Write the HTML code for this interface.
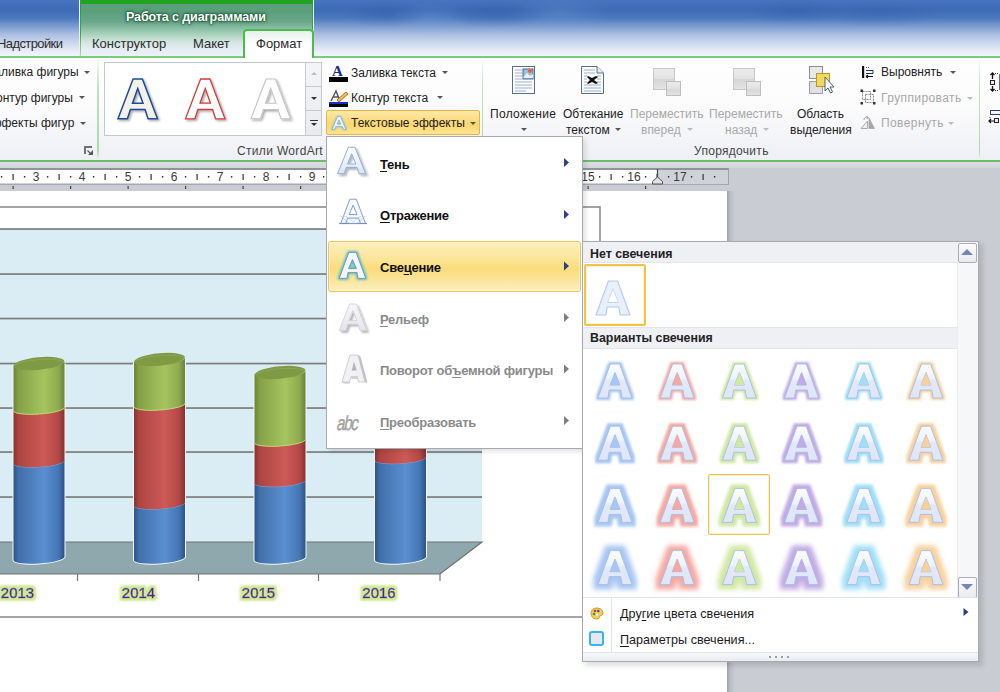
<!DOCTYPE html>
<html><head><meta charset="utf-8">
<style>
*{margin:0;padding:0;box-sizing:border-box}
html,body{width:1000px;height:692px;overflow:hidden}
body{position:relative;background:#c9ccd2;font-family:"Liberation Sans",sans-serif;font-size:12px;color:#1e1e1e}
.a{position:absolute;white-space:nowrap}
#title{left:0;top:0;width:1000px;height:57px;background:linear-gradient(#4774bd 0,#3d6bb6 10px,#4c78bd 18px,#7f9fd2 27px,#a9bde0 34px,#d3ddef 45px,#eaeff8 52px,#f2f4f9 56px)}
#ctx{left:79px;top:0;width:235px;height:57px;background:linear-gradient(#5a9e7c 0,#5b9f7d 12px,#6aa88a 22px,#9ccbb2 32px,#d4e6e0 42px,#e6edf4 50px,#eef2f8 57px);border-left:1px solid #e8f0ea;border-right:1px solid #e8f0ea}
#ctxbar{left:80px;top:0;width:233px;height:4px;background:#21a421}
#ribbon{left:0;top:56px;width:1000px;height:106px;background:linear-gradient(#ffffff 0,#fbfbfc 50px,#eeeff5 104px);border-top:2px solid #78cd78;border-bottom:2px solid #6cbb6c}
.tab{top:36px;font-size:13px;color:#2b2b2b}
#fmt{left:243px;top:29px;width:71px;height:29px;background:linear-gradient(#e6f1ea,#ffffff 14px);border:2px solid #4cbb4c;border-bottom:none;border-radius:4px 4px 0 0}
.sep{width:1px;background:linear-gradient(#f3faf3,#b8e4b8 30%,#a8dca8 90%,#eef5ee)}
.lbl{font-size:12px;color:#222}
.dd{display:inline-block;width:0;height:0;border-left:3px solid transparent;border-right:3px solid transparent;border-top:3px solid #555;vertical-align:middle}
.mi{font-size:13px;font-weight:bold;color:#111;letter-spacing:-0.25px}
.mi u{text-decoration:underline;text-decoration-thickness:1px;text-underline-offset:2px}
.dis{color:#8a8a8a}
.gh{font-size:12.4px;font-weight:bold;color:#222}
.gi{font-size:12.6px;color:#1a1a1a}
.gi u{text-decoration:underline;text-underline-offset:2px}
</style></head><body>
<div id="title" class="a"></div>
<div class="a" style="left:0;top:0;width:1000px;height:40px;background:radial-gradient(40px 14px at 385px 14px,rgba(30,70,150,0.22),transparent),radial-gradient(50px 14px at 495px 14px,rgba(30,70,150,0.22),transparent),radial-gradient(50px 14px at 796px 12px,rgba(30,70,150,0.2),transparent),radial-gradient(60px 14px at 880px 14px,rgba(30,70,150,0.18),transparent),radial-gradient(50px 18px at 560px 14px,rgba(140,175,225,0.2),transparent),radial-gradient(40px 18px at 430px 20px,rgba(140,175,225,0.2),transparent)"></div>
<div id="ctx" class="a"></div>
<div id="ctxbar" class="a"></div>
<div class="a" style="left:80px;top:0;width:1px;height:57px;background:linear-gradient(#22a422,#3aa848 60%,#b8dcc0)"></div>
<div class="a" style="left:312px;top:0;width:1px;height:57px;background:linear-gradient(#22a422,#3aa848 60%,#b8dcc0)"></div>
<div class="a" style="left:126px;top:10px;font-size:12.5px;font-weight:bold;color:#fff;letter-spacing:-0.1px;text-shadow:0 0 1px #17502e,0 0 2px #17502e,0 0 3px #1f5f3a,0 0 4px #2a6b45">Работа с диаграммами</div>
<div id="ribbon" class="a"></div>
<div id="fmt" class="a"></div>
<div class="a tab" style="left:-3px;letter-spacing:-0.6px">Надстройки</div>
<div class="a tab" style="left:92px">Конструктор</div>
<div class="a tab" style="left:193px">Макет</div>
<div class="a tab" style="left:256px">Формат</div>

<!-- ribbon group 1 (shape styles partial) -->
<div class="a lbl" style="left:-13px;top:65px">Заливка фигуры</div>
<div class="a lbl" style="left:-11px;top:91px">Контур фигуры</div>
<div class="a lbl" style="left:-17px;top:116px">Эффекты фигур</div>
<div class="a dd" style="left:84px;top:71px"></div>
<div class="a dd" style="left:79px;top:96px"></div>
<div class="a dd" style="left:80px;top:122px"></div>
<svg class="a" style="left:83px;top:145px" width="10" height="11"><path d="M2 9V2H9" fill="none" stroke="#707070" stroke-width="2"/><path d="M4.5 5.5L8 9" stroke="#555" stroke-width="1.3"/><path d="M5 10H10V5Z" fill="#555"/></svg>
<div class="a sep" style="left:97px;top:60px;height:100px;width:2px"></div>
<!-- WordArt gallery -->
<div class="a" style="left:104px;top:62px;width:202px;height:74px;background:#fff;border:1px solid #c5c8cf"></div>
<div class="a" style="left:305px;top:62px;width:17px;height:74px;border:1px solid #c5c8cf;background:linear-gradient(#f4f5f7,#e9ebef)"></div>
<div class="a" style="left:305px;top:86px;width:17px;height:1px;background:#c5c8cf"></div>
<div class="a" style="left:305px;top:110px;width:17px;height:1px;background:#c5c8cf"></div>
<div class="a" style="left:311px;top:72px;width:0;height:0;border-left:3px solid transparent;border-right:3px solid transparent;border-bottom:3px solid #bbb"></div>
<div class="a" style="left:311px;top:97px;width:0;height:0;border-left:3px solid transparent;border-right:3px solid transparent;border-top:3px solid #333"></div>
<div class="a" style="left:310px;top:120px;width:8px;height:1px;background:#333"></div>
<div class="a" style="left:311px;top:123px;width:0;height:0;border-left:3px solid transparent;border-right:3px solid transparent;border-top:3px solid #333"></div>
<svg class="a" style="left:112px;top:74px" width="200" height="52">
 <defs><filter id="sh" x="-20%" y="-20%" width="150%" height="150%"><feDropShadow dx="1.5" dy="1.5" stdDeviation="1" flood-color="#000" flood-opacity="0.35"/></filter></defs>
 <g filter="url(#sh)"><path transform="translate(6,5)" d="M15.09 0H24.41L39.50 39.80H30.10L27.06 30.49H12.44L9.40 39.80H0ZM19.75 9.39L14.50 24.20H25.00Z" fill="#f3f1e8" stroke="#1f4a9a" stroke-width="1.5" fill-rule="evenodd"/></g>
 <g filter="url(#sh)"><path transform="translate(73.5,5)" d="M15.09 0H24.41L39.50 39.80H30.10L27.06 30.49H12.44L9.40 39.80H0ZM19.75 9.39L14.50 24.20H25.00Z" fill="#ffffff" stroke="#d23a3a" stroke-width="1.3" fill-rule="evenodd"/></g>
 <g filter="url(#sh)"><path transform="translate(139,5)" d="M15.09 0H24.41L39.50 39.80H30.10L27.06 30.49H12.44L9.40 39.80H0ZM19.75 9.39L14.50 24.20H25.00Z" fill="#ffffff" stroke="#c4c4c4" stroke-width="1.1" fill-rule="evenodd"/></g>
</svg>
<div class="a lbl" style="left:237px;top:144px;color:#444;letter-spacing:0.33px">Стили WordArt</div>
<!-- text fill etc -->
<svg class="a" style="left:328px;top:63px" width="22" height="20"><text x="4" y="13" font-family="Liberation Serif" font-weight="bold" font-size="15" fill="#1d2f8c">A</text><rect x="1" y="14" width="19" height="5" fill="#000"/></svg>
<div class="a lbl" style="left:351px;top:66px">Заливка текста</div>
<div class="a dd" style="left:442px;top:71px"></div>
<svg class="a" style="left:328px;top:88px" width="22" height="20"><path d="M3 13L8 3L12 13M5 9H11" fill="none" stroke="#555" stroke-width="1.4"/><path d="M9 12L18 4L20 6L11 14Z" fill="#f5c04a" stroke="#a05020" stroke-width="0.8"/><rect x="1" y="14" width="19" height="2" fill="#1030d0"/><rect x="1" y="16" width="19" height="3" fill="#000"/></svg>
<div class="a lbl" style="left:351px;top:91px">Контур текста</div>
<div class="a dd" style="left:437px;top:96px"></div>
<div class="a" style="left:326px;top:110px;width:154px;height:25px;border:1px solid #e4b549;border-radius:2px;background:linear-gradient(#fde9a6,#fbd97a 50%,#fad56c 51%,#fde48f)"></div>
<svg class="a" style="left:330px;top:113px" width="20" height="20"><defs><filter id="gl"><feGaussianBlur stdDeviation="1"/></filter></defs><path d="M7 3H11L17 17H13L12 14H6L5 17H1ZM9 7L7 11H11Z" fill="#6ec8d8" filter="url(#gl)"/><path d="M7.5 3.5H10.5L16 16.5H13.5L12.3 13.5H5.7L4.5 16.5H2ZM9 7L7.2 11.2H10.8Z" fill="#eef4fb" stroke="#7fa6cf" stroke-width="0.7"/></svg>
<div class="a lbl" style="left:351px;top:116px">Текстовые эффекты</div>
<div class="a dd" style="left:470px;top:122px"></div>
<div class="a sep" style="left:482px;top:60px;height:100px"></div>

<!-- Arrange group -->
<svg class="a" style="left:511px;top:65px" width="26" height="31">
 <rect x="1.5" y="1.5" width="22" height="27" fill="#fbfcfe" stroke="#5b6f8c"/>
 <g stroke="#9fb0c8" stroke-width="1"><path d="M4 5H11M4 8H11M4 11H11M4 14H11M4 17H21M4 20H21M4 23H21M4 26H15"/></g>
 <rect x="12" y="4" width="10" height="10" fill="#9cc0e0" stroke="#4a6b95"/><path d="M12 13L16 8L19 11L22 9V13Z" fill="#fff" opacity="0.8"/><circle cx="19" cy="6" r="2" fill="#f06030"/>
</svg>
<div class="a lbl" style="left:490px;top:107px;letter-spacing:0.3px">Положение</div>
<div class="a dd" style="left:521px;top:128px"></div>
<svg class="a" style="left:580px;top:65px" width="26" height="31">
 <path d="M1.5 1.5H17L23.5 8V28.5H1.5Z" fill="#fbfcfe" stroke="#5b6f8c"/><path d="M17 1.5V8H23.5" fill="#e8ecf2" stroke="#5b6f8c"/>
 <g stroke="#9fb0c8" stroke-width="1"><path d="M4 5H15M4 8H15M4 11H7M17 11H21M4 14H7M17 14H21M4 17H7M17 17H21M4 20H21M4 23H21M4 26H21"/></g>
 <path d="M8 11L12 13L16 11L18 12L14 15L18 18L16 19L12 17L8 19L7 18L10 15L7 12Z" fill="#111"/>
</svg>
<div class="a lbl" style="left:563px;top:107px">Обтекание</div>
<div class="a lbl" style="left:566px;top:123px">текстом</div>
<div class="a dd" style="left:615px;top:128px"></div>
<svg class="a" style="left:652px;top:67px" width="32" height="31">
 <rect x="1.5" y="1.5" width="21" height="21" fill="url(#gr1)" stroke="#c8c8c8"/>
 <rect x="14.5" y="14.5" width="14" height="14" fill="url(#gr1)" stroke="#bdbdbd"/>
 <defs><linearGradient id="gr1" x1="0" y1="0" x2="0" y2="1"><stop offset="0" stop-color="#ececec"/><stop offset="0.5" stop-color="#e2e2e2"/><stop offset="0.52" stop-color="#d6d6d6"/><stop offset="1" stop-color="#e4e4e4"/></linearGradient></defs>
</svg>
<div class="a lbl" style="left:630px;top:107px;color:#a8a8a8">Переместить</div>
<div class="a lbl" style="left:641px;top:123px;color:#a8a8a8">вперед</div>
<div class="a dd" style="left:687px;top:128px;border-top-color:#bbb"></div>
<svg class="a" style="left:732px;top:67px" width="32" height="31">
 <rect x="1.5" y="1.5" width="21" height="21" fill="url(#gr1)" stroke="#c8c8c8"/>
 <rect x="14.5" y="14.5" width="14" height="14" fill="url(#gr1)" stroke="#bdbdbd"/>
</svg>
<div class="a lbl" style="left:709px;top:107px;color:#a8a8a8">Переместить</div>
<div class="a lbl" style="left:725px;top:123px;color:#a8a8a8">назад</div>
<div class="a dd" style="left:763px;top:128px;border-top-color:#bbb"></div>
<svg class="a" style="left:808px;top:65px" width="30" height="31">
 <rect x="1.5" y="1.5" width="13" height="12" fill="#e8e8e8" stroke="#8a8f99"/>
 <rect x="1.5" y="16.5" width="13" height="12" fill="#e0e0e0" stroke="#9a9fa9"/>
 <rect x="8.5" y="8.5" width="13" height="13" fill="#f5d85a" stroke="#b89a2a"/>
 <path d="M17 12V26L20 23L22.5 28L24.5 27L22 22H26Z" fill="#fff" stroke="#4a5f80" stroke-width="1"/>
</svg>
<div class="a lbl" style="left:797px;top:107px">Область</div>
<div class="a lbl" style="left:790px;top:123px">выделения</div>
<svg class="a" style="left:860px;top:64px" width="16" height="16"><rect x="2" y="2" width="2.2" height="12" fill="#111"/><path d="M6 3.5H10" stroke="#555" stroke-dasharray="1 1"/><path d="M6 6.5H13M6 9.5H13" stroke="#1f3560" stroke-width="1.2"/><path d="M13 6.5V9.5" stroke="#1f3560"/><path d="M6 12.5H13M6 12.5L8 11M6 12.5L8 14" stroke="#111" stroke-width="1.1"/></svg>
<div class="a lbl" style="left:881px;top:65px">Выровнять</div>
<div class="a dd" style="left:950px;top:71px"></div>
<svg class="a" style="left:860px;top:89px" width="16" height="16"><rect x="2.5" y="2.5" width="8" height="8" fill="none" stroke="#8a8a8a" stroke-dasharray="2 1"/><rect x="5.5" y="5.5" width="8" height="8" fill="none" stroke="#8a8a8a" stroke-dasharray="2 1"/><rect x="0.5" y="0.5" width="2.5" height="2.5" fill="#333"/><rect x="13" y="0.5" width="2.5" height="2.5" fill="#333"/><rect x="0.5" y="13" width="2.5" height="2.5" fill="#333"/><rect x="13" y="13" width="2.5" height="2.5" fill="#333"/></svg>
<div class="a lbl" style="left:881px;top:91px;color:#a8a8a8;letter-spacing:0.4px">Группировать</div>
<div class="a dd" style="left:967px;top:97px;border-top-color:#bbb"></div>
<svg class="a" style="left:860px;top:115px" width="16" height="15"><path d="M1 13.5L7.5 6V13.5Z" fill="#f0f0f0" stroke="#aaa"/><path d="M9 3L14.5 13.5H9Z" fill="#a8a8a8" stroke="#999" stroke-width="0.6"/><path d="M4 5C4 2.5 6 1.5 8 2.5M8 2.5L6.5 1M8 2.5L6.8 4" stroke="#999" fill="none"/></svg>
<div class="a lbl" style="left:881px;top:116px;color:#a8a8a8;letter-spacing:0.4px">Повернуть</div>
<div class="a dd" style="left:948px;top:122px;border-top-color:#bbb"></div>
<div class="a lbl" style="left:694px;top:144px;color:#444;letter-spacing:0.3px">Упорядочить</div>
<div class="a sep" style="left:979px;top:60px;height:100px"></div>
<svg class="a" style="left:988px;top:72px" width="12" height="56"><path d="M4.5 1V7M2.5 3L4.5 1L6.5 3" stroke="#111" stroke-width="1.3" fill="none"/><rect x="2.5" y="8.5" width="4" height="4" fill="#eee" stroke="#222"/><path d="M4.5 14V19M2.5 17L4.5 19L6.5 17" stroke="#111" stroke-width="1.3" fill="none"/><path d="M7 1.5H11M7 18.5H11" stroke="#333" stroke-dasharray="1 1"/><rect x="11" y="2" width="1" height="16" fill="#5a6f98"/><rect x="2.5" y="38.5" width="10" height="4" fill="#f4f6fa" stroke="#2b3f6a"/><path d="M2 45V47" stroke="#333" stroke-dasharray="1 1"/><path d="M1 49H6M3 47L1 49L3 51" stroke="#111" stroke-width="1.2" fill="none"/><rect x="6.5" y="46.5" width="4" height="4" fill="#eee" stroke="#222"/></svg>

<!-- doc area -->
<div class="a" style="left:0;top:162px;width:1000px;height:6px;background:linear-gradient(#dcdee3,#d2d5da)"></div>
<div class="a" style="left:0;top:168px;width:729px;height:17px;background:#cfd2d8;border-top:2px solid #8f949b;border-bottom:1px solid #a3a7ae;border-right:1px solid #9ea3ab"></div>
<div class="a" style="left:0;top:170px;width:657px;height:13px;background:#fdfdfd"></div>
<svg class="a" style="left:0;top:168px" width="729" height="24"><rect x="12.5" y="6" width="1.2" height="6" fill="#333"/><rect x="0.9" y="8" width="1.4" height="1.6" fill="#333"/><rect x="23.9" y="8" width="1.4" height="1.6" fill="#333"/><text x="36.0" y="13" text-anchor="middle" font-size="12" fill="#3a3a3a" font-family="Liberation Sans">3</text><rect x="58.5" y="6" width="1.2" height="6" fill="#333"/><rect x="46.9" y="8" width="1.4" height="1.6" fill="#333"/><rect x="69.9" y="8" width="1.4" height="1.6" fill="#333"/><text x="82.0" y="13" text-anchor="middle" font-size="12" fill="#3a3a3a" font-family="Liberation Sans">4</text><rect x="104.5" y="6" width="1.2" height="6" fill="#333"/><rect x="92.9" y="8" width="1.4" height="1.6" fill="#333"/><rect x="115.9" y="8" width="1.4" height="1.6" fill="#333"/><text x="128.0" y="13" text-anchor="middle" font-size="12" fill="#3a3a3a" font-family="Liberation Sans">5</text><rect x="150.5" y="6" width="1.2" height="6" fill="#333"/><rect x="138.9" y="8" width="1.4" height="1.6" fill="#333"/><rect x="161.9" y="8" width="1.4" height="1.6" fill="#333"/><text x="174.0" y="13" text-anchor="middle" font-size="12" fill="#3a3a3a" font-family="Liberation Sans">6</text><rect x="196.5" y="6" width="1.2" height="6" fill="#333"/><rect x="184.9" y="8" width="1.4" height="1.6" fill="#333"/><rect x="207.9" y="8" width="1.4" height="1.6" fill="#333"/><text x="220.0" y="13" text-anchor="middle" font-size="12" fill="#3a3a3a" font-family="Liberation Sans">7</text><rect x="242.5" y="6" width="1.2" height="6" fill="#333"/><rect x="230.9" y="8" width="1.4" height="1.6" fill="#333"/><rect x="253.9" y="8" width="1.4" height="1.6" fill="#333"/><text x="266.0" y="13" text-anchor="middle" font-size="12" fill="#3a3a3a" font-family="Liberation Sans">8</text><rect x="288.5" y="6" width="1.2" height="6" fill="#333"/><rect x="276.9" y="8" width="1.4" height="1.6" fill="#333"/><rect x="299.9" y="8" width="1.4" height="1.6" fill="#333"/><text x="312.0" y="13" text-anchor="middle" font-size="12" fill="#3a3a3a" font-family="Liberation Sans">9</text><rect x="334.5" y="6" width="1.2" height="6" fill="#333"/><rect x="322.9" y="8" width="1.4" height="1.6" fill="#333"/><rect x="345.9" y="8" width="1.4" height="1.6" fill="#333"/><text x="358.0" y="13" text-anchor="middle" font-size="12" fill="#3a3a3a" font-family="Liberation Sans">10</text><rect x="380.5" y="6" width="1.2" height="6" fill="#333"/><rect x="368.9" y="8" width="1.4" height="1.6" fill="#333"/><rect x="391.9" y="8" width="1.4" height="1.6" fill="#333"/><text x="404.0" y="13" text-anchor="middle" font-size="12" fill="#3a3a3a" font-family="Liberation Sans">11</text><rect x="426.5" y="6" width="1.2" height="6" fill="#333"/><rect x="414.9" y="8" width="1.4" height="1.6" fill="#333"/><rect x="437.9" y="8" width="1.4" height="1.6" fill="#333"/><text x="450.0" y="13" text-anchor="middle" font-size="12" fill="#3a3a3a" font-family="Liberation Sans">12</text><rect x="472.5" y="6" width="1.2" height="6" fill="#333"/><rect x="460.9" y="8" width="1.4" height="1.6" fill="#333"/><rect x="483.9" y="8" width="1.4" height="1.6" fill="#333"/><text x="496.0" y="13" text-anchor="middle" font-size="12" fill="#3a3a3a" font-family="Liberation Sans">13</text><rect x="518.5" y="6" width="1.2" height="6" fill="#333"/><rect x="506.9" y="8" width="1.4" height="1.6" fill="#333"/><rect x="529.9" y="8" width="1.4" height="1.6" fill="#333"/><text x="542.0" y="13" text-anchor="middle" font-size="12" fill="#3a3a3a" font-family="Liberation Sans">14</text><rect x="564.5" y="6" width="1.2" height="6" fill="#333"/><rect x="552.9" y="8" width="1.4" height="1.6" fill="#333"/><rect x="575.9" y="8" width="1.4" height="1.6" fill="#333"/><text x="588.0" y="13" text-anchor="middle" font-size="12" fill="#3a3a3a" font-family="Liberation Sans">15</text><rect x="610.5" y="6" width="1.2" height="6" fill="#333"/><rect x="598.9" y="8" width="1.4" height="1.6" fill="#333"/><rect x="621.9" y="8" width="1.4" height="1.6" fill="#333"/><text x="634.0" y="13" text-anchor="middle" font-size="12" fill="#3a3a3a" font-family="Liberation Sans">16</text><rect x="656.5" y="6" width="1.2" height="6" fill="#333"/><rect x="644.9" y="8" width="1.4" height="1.6" fill="#333"/><rect x="667.9" y="8" width="1.4" height="1.6" fill="#333"/><text x="680.0" y="13" text-anchor="middle" font-size="12" fill="#3a3a3a" font-family="Liberation Sans">17</text><rect x="702.5" y="6" width="1.2" height="6" fill="#333"/><rect x="690.9" y="8" width="1.4" height="1.6" fill="#333"/><rect x="713.9" y="8" width="1.4" height="1.6" fill="#333"/><rect x="12.5" y="18" width="1.2" height="3" fill="#444"/><rect x="70.0" y="18" width="1.2" height="3" fill="#444"/><rect x="127.5" y="18" width="1.2" height="3" fill="#444"/><rect x="185.0" y="18" width="1.2" height="3" fill="#444"/><rect x="242.5" y="18" width="1.2" height="3" fill="#444"/><rect x="300.0" y="18" width="1.2" height="3" fill="#444"/><rect x="357.5" y="18" width="1.2" height="3" fill="#444"/><rect x="415.0" y="18" width="1.2" height="3" fill="#444"/><rect x="472.5" y="18" width="1.2" height="3" fill="#444"/><rect x="530.0" y="18" width="1.2" height="3" fill="#444"/><rect x="587.5" y="18" width="1.2" height="3" fill="#444"/><rect x="645.0" y="18" width="1.2" height="3" fill="#444"/><path d="M652.5 16V13.5L657.5 9L662.5 13.5V16Z" fill="#e2e2e2" stroke="#555"/><path d="M657.5 1V9" stroke="#444" stroke-width="1.2"/></svg>
<div class="a" style="left:727px;top:191px;width:8px;height:501px;background:linear-gradient(90deg,#9ea2a9,#b9bcc2 3px,#c9ccd2)"></div>
<div class="a" style="left:0;top:191px;width:727px;height:501px;background:#fff"></div>
<svg class="a" style="left:0;top:191px" width="727" height="501"><defs>
<linearGradient id="cg" x1="0" x2="1"><stop offset="0" stop-color="#6a8436"/><stop offset="0.1" stop-color="#84a148"/><stop offset="0.6" stop-color="#a5c55f"/><stop offset="0.88" stop-color="#8dab4e"/><stop offset="1" stop-color="#68823a"/></linearGradient>
<linearGradient id="cr" x1="0" x2="1"><stop offset="0" stop-color="#853331"/><stop offset="0.1" stop-color="#ad4542"/><stop offset="0.6" stop-color="#cd5a56"/><stop offset="0.88" stop-color="#b44846"/><stop offset="1" stop-color="#823230"/></linearGradient>
<linearGradient id="cb" x1="0" x2="1"><stop offset="0" stop-color="#2d5386"/><stop offset="0.1" stop-color="#4170ab"/><stop offset="0.6" stop-color="#5a8fd0"/><stop offset="0.88" stop-color="#4576b4"/><stop offset="1" stop-color="#2c5284"/></linearGradient>
<filter id="lg" x="-30%" y="-50%" width="160%" height="200%"><feMorphology operator="dilate" radius="2" in="SourceAlpha" result="d"/><feGaussianBlur in="d" stdDeviation="1" result="b"/><feFlood flood-color="#cdea92"/><feComposite in2="b" operator="in" result="g"/><feMerge><feMergeNode in="g"/><feMergeNode in="g"/><feMergeNode in="SourceGraphic"/></feMerge></filter>
</defs><rect x="-5" y="16" width="605" height="410" fill="#fff" stroke="#8c8c8c" stroke-width="1.6"/><rect x="0" y="38" width="482" height="313" fill="#daecf4"/><rect x="0" y="37.2" width="482" height="1.7" fill="#7d7d7d"/><rect x="0" y="82.2" width="482" height="1.7" fill="#7d7d7d"/><rect x="0" y="126.7" width="482" height="1.7" fill="#7d7d7d"/><rect x="0" y="171.7" width="482" height="1.7" fill="#7d7d7d"/><rect x="0" y="216.2" width="482" height="1.7" fill="#7d7d7d"/><rect x="0" y="260.2" width="482" height="1.7" fill="#7d7d7d"/><rect x="0" y="305.2" width="482" height="1.7" fill="#7d7d7d"/><path d="M0 351H482L440 383H0Z" fill="#8ea8ae"/><path d="M0 351H482L440 383H0" fill="none" stroke="#707070" stroke-width="1.2"/><path d="M77.5 383V390" stroke="#777" stroke-width="1.2"/><path d="M198.5 383V390" stroke="#777" stroke-width="1.2"/><path d="M318.5 383V390" stroke="#777" stroke-width="1.2"/><path d="M440 383V390" stroke="#777" stroke-width="1.2"/><path d="M12.5 174.3L12.5 369.3 A26.5 6 -4 0 0 65.5 365.7 L65.5 170.7 A26.5 6 -4 0 1 12.5 174.3Z" fill="#f4f8fa"/><path d="M13.5 272.8L13.5 369.3 A25.5 5 -4 0 0 64.5 365.7 L64.5 269.2 A25.5 5 -4 0 1 13.5 272.8Z" fill="url(#cb)"/><path d="M13.5 272.8A25.5 5 -4 0 0 64.5 269.2" fill="none" stroke="#6fa0e0" stroke-width="1" opacity="0.8"/><path d="M13.5 219.8L13.5 272.8 A25.5 5 -4 0 0 64.5 269.2 L64.5 216.2 A25.5 5 -4 0 1 13.5 219.8Z" fill="url(#cr)"/><path d="M13.5 219.8A25.5 5 -4 0 0 64.5 216.2" fill="none" stroke="#e06560" stroke-width="1" opacity="0.8"/><path d="M13.5 174.3L13.5 219.8 A25.5 5 -4 0 0 64.5 216.2 L64.5 170.7 A25.5 5 -4 0 1 13.5 174.3Z" fill="url(#cg)"/><path d="M13.5 219.8A25.5 5 -4 0 0 64.5 216.2" fill="none" stroke="#b6e070" stroke-width="1" opacity="0.9"/><ellipse cx="39.0" cy="172.5" rx="25.5" ry="6.2" transform="rotate(-5.5 39.0 172.5)" fill="#7f9a44"/><path d="M15.5 173.5A25.5 5 -4 0 1 63.5 170.5" fill="none" stroke="#a8c46a" stroke-width="1" opacity="0.3"/><path d="M133 170.3L133 369.3 A26.5 6 -4 0 0 186.0 365.7 L186.0 166.7 A26.5 6 -4 0 1 133 170.3Z" fill="#f4f8fa"/><path d="M134 314.8L134 369.3 A25.5 5 -4 0 0 185.0 365.7 L185.0 311.2 A25.5 5 -4 0 1 134 314.8Z" fill="url(#cb)"/><path d="M134 314.8A25.5 5 -4 0 0 185.0 311.2" fill="none" stroke="#6fa0e0" stroke-width="1" opacity="0.8"/><path d="M134 215.8L134 314.8 A25.5 5 -4 0 0 185.0 311.2 L185.0 212.2 A25.5 5 -4 0 1 134 215.8Z" fill="url(#cr)"/><path d="M134 215.8A25.5 5 -4 0 0 185.0 212.2" fill="none" stroke="#e06560" stroke-width="1" opacity="0.8"/><path d="M134 170.3L134 215.8 A25.5 5 -4 0 0 185.0 212.2 L185.0 166.7 A25.5 5 -4 0 1 134 170.3Z" fill="url(#cg)"/><path d="M134 215.8A25.5 5 -4 0 0 185.0 212.2" fill="none" stroke="#b6e070" stroke-width="1" opacity="0.9"/><ellipse cx="159.5" cy="168.5" rx="25.5" ry="6.2" transform="rotate(-5.5 159.5 168.5)" fill="#7f9a44"/><path d="M136 169.5A25.5 5 -4 0 1 184.0 166.5" fill="none" stroke="#a8c46a" stroke-width="1" opacity="0.3"/><path d="M253.5 183.3L253.5 369.3 A26.5 6 -4 0 0 306.5 365.7 L306.5 179.7 A26.5 6 -4 0 1 253.5 183.3Z" fill="#f4f8fa"/><path d="M254.5 292.3L254.5 369.3 A25.5 5 -4 0 0 305.5 365.7 L305.5 288.7 A25.5 5 -4 0 1 254.5 292.3Z" fill="url(#cb)"/><path d="M254.5 292.3A25.5 5 -4 0 0 305.5 288.7" fill="none" stroke="#6fa0e0" stroke-width="1" opacity="0.8"/><path d="M254.5 251.8L254.5 292.3 A25.5 5 -4 0 0 305.5 288.7 L305.5 248.2 A25.5 5 -4 0 1 254.5 251.8Z" fill="url(#cr)"/><path d="M254.5 251.8A25.5 5 -4 0 0 305.5 248.2" fill="none" stroke="#e06560" stroke-width="1" opacity="0.8"/><path d="M254.5 183.3L254.5 251.8 A25.5 5 -4 0 0 305.5 248.2 L305.5 179.7 A25.5 5 -4 0 1 254.5 183.3Z" fill="url(#cg)"/><path d="M254.5 251.8A25.5 5 -4 0 0 305.5 248.2" fill="none" stroke="#b6e070" stroke-width="1" opacity="0.9"/><ellipse cx="280.0" cy="181.5" rx="25.5" ry="6.2" transform="rotate(-5.5 280.0 181.5)" fill="#7f9a44"/><path d="M256.5 182.5A25.5 5 -4 0 1 304.5 179.5" fill="none" stroke="#a8c46a" stroke-width="1" opacity="0.3"/><path d="M374 110.8L374 369.3 A26.5 6 -4 0 0 427.0 365.7 L427.0 107.2 A26.5 6 -4 0 1 374 110.8Z" fill="#f4f8fa"/><path d="M375 269.3L375 369.3 A25.5 5 -4 0 0 426.0 365.7 L426.0 265.7 A25.5 5 -4 0 1 375 269.3Z" fill="url(#cb)"/><path d="M375 269.3A25.5 5 -4 0 0 426.0 265.7" fill="none" stroke="#6fa0e0" stroke-width="1" opacity="0.8"/><path d="M375 230.8L375 269.3 A25.5 5 -4 0 0 426.0 265.7 L426.0 227.2 A25.5 5 -4 0 1 375 230.8Z" fill="url(#cr)"/><path d="M375 230.8A25.5 5 -4 0 0 426.0 227.2" fill="none" stroke="#e06560" stroke-width="1" opacity="0.8"/><path d="M375 110.8L375 230.8 A25.5 5 -4 0 0 426.0 227.2 L426.0 107.2 A25.5 5 -4 0 1 375 110.8Z" fill="url(#cg)"/><path d="M375 230.8A25.5 5 -4 0 0 426.0 227.2" fill="none" stroke="#b6e070" stroke-width="1" opacity="0.9"/><ellipse cx="400.5" cy="109" rx="25.5" ry="6.2" transform="rotate(-5.5 400.5 109)" fill="#7f9a44"/><path d="M377 110.0A25.5 5 -4 0 1 425.0 107.0" fill="none" stroke="#a8c46a" stroke-width="1" opacity="0.3"/><text x="17.5" y="406.6" text-anchor="middle" font-size="15" fill="#5a1f96" stroke="#5a1f96" stroke-width="0.6" font-family="Liberation Sans" filter="url(#lg)">2013</text><text x="138.5" y="406.6" text-anchor="middle" font-size="15" fill="#5a1f96" stroke="#5a1f96" stroke-width="0.6" font-family="Liberation Sans" filter="url(#lg)">2014</text><text x="258.5" y="406.6" text-anchor="middle" font-size="15" fill="#5a1f96" stroke="#5a1f96" stroke-width="0.6" font-family="Liberation Sans" filter="url(#lg)">2015</text><text x="379" y="406.6" text-anchor="middle" font-size="15" fill="#5a1f96" stroke="#5a1f96" stroke-width="0.6" font-family="Liberation Sans" filter="url(#lg)">2016</text></svg>
<!-- menu -->
<div class="a" style="left:329px;top:139px;width:257px;height:313px;background:rgba(0,0,0,0.10);border-radius:2px;filter:blur(2px)"></div>
<div class="a" style="left:326px;top:136px;width:257px;height:313px;background:#fff;border:1px solid #a7abb0"></div>
<svg class="a" style="left:326px;top:136px" width="257" height="313"><defs><linearGradient id="af" x1="0" y1="0" x2="0" y2="1"><stop offset="0" stop-color="#ffffff"/><stop offset="0.5" stop-color="#edf2fb"/><stop offset="1" stop-color="#d9e4f5"/></linearGradient><linearGradient id="hl" x1="0" y1="0" x2="0" y2="1"><stop offset="0" stop-color="#fdf0c0"/><stop offset="0.35" stop-color="#fbe597"/><stop offset="0.55" stop-color="#fadc7c"/><stop offset="0.8" stop-color="#fbe6a0"/><stop offset="1" stop-color="#fdf1c6"/></linearGradient><filter id="ash" x="-30%" y="-30%" width="160%" height="160%"><feGaussianBlur in="SourceAlpha" stdDeviation="1"/><feOffset dx="1.5" dy="2"/><feComponentTransfer><feFuncA type="linear" slope="0.3"/></feComponentTransfer><feMerge><feMergeNode/><feMergeNode in="SourceGraphic"/></feMerge></filter><filter id="tglow" x="-40%" y="-40%" width="180%" height="180%"><feMorphology operator="dilate" radius="1.2" in="SourceAlpha" result="d"/><feGaussianBlur in="d" stdDeviation="0.9" result="b"/><feFlood flood-color="#55c3b6"/><feComposite in2="b" operator="in" result="g"/><feMerge><feMergeNode in="g"/><feMergeNode in="SourceGraphic"/></feMerge></filter><linearGradient id="gray" x1="0" y1="0" x2="0" y2="1"><stop offset="0" stop-color="#f7f6f9"/><stop offset="1" stop-color="#e6e5ea"/></linearGradient><linearGradient id="rfl" x1="0" y1="0" x2="0" y2="1"><stop offset="0" stop-color="#8fa9d6" stop-opacity="0.6"/><stop offset="1" stop-color="#8fa9d6" stop-opacity="0"/></linearGradient></defs><rect x="2.5" y="105.5" width="252" height="50" rx="2.5" fill="url(#hl)" stroke="#f2c458"/><rect x="3.5" y="106.5" width="250" height="48" rx="2" fill="none" stroke="#fff7dc" stroke-opacity="0.6"/><g transform="translate(11.5,11.2)" filter="url(#ash)"><path d="M10.90 0H17.40L28.30 26.60H21.71L19.45 20.22H8.85L6.59 26.60H0ZM14.15 6.60L10.05 16.81H18.25Z" fill="url(#af)" stroke="#86a6d6" stroke-width="0.9" fill-rule="evenodd"/></g><g transform="translate(14.7,63.2)"><path d="M9.18 0H15.62L24.80 24.30H19.84L17.76 18.95H7.04L4.96 24.30H0ZM12.40 6.03L8.43 15.36H16.37Z" fill="#f6f8fd" stroke="#7393cb" stroke-width="0.9" fill-rule="evenodd"/><path d="M-1.5 24.3H26.3" stroke="#6e8fc8" stroke-width="1.2"/></g><g transform="translate(14.7,87.5) scale(1,-0.3)" opacity="0.5"><path d="M9.18 0H15.62L24.80 24.30H19.84L17.76 18.95H7.04L4.96 24.30H0ZM12.40 6.03L8.43 15.36H16.37Z" fill="none" stroke="#a8bde0" stroke-width="1.5" fill-rule="evenodd"/></g><g transform="translate(13.2,116.4)" filter="url(#tglow)"><path d="M9.64 0H16.96L26.60 26.00H18.81L17.86 20.20H8.74L7.79 26.00H0ZM13.30 7.20L9.39 16.20H17.21Z" fill="#f4f5fd" stroke="#6c8fcc" stroke-width="0.9" fill-rule="evenodd"/></g><g transform="translate(13.2,168)" filter="url(#ash)"><path d="M10.45 0H17.05L27.50 26.40H20.90L18.84 20.06H8.66L6.60 26.40H0ZM13.75 6.55L9.76 16.68H17.74Z" fill="url(#gray)" stroke="#cfcfd4" stroke-width="0.8" fill-rule="evenodd"/></g><g transform="translate(16,218)"><path d="M8 1H16L23 28H16.5L15.3 22.5H9L7.5 28H0Z" fill="#f1f0f4" stroke="#c4c4ca" stroke-width="0.8"/><path d="M16 1L18.5 2.5L25.5 29L23 28Z" fill="#c0c0c6"/><path d="M12 7.5L9.8 16.5H14.8Z" fill="#b4b4ba"/><path d="M9 22.5H15.3L16 25H9.5Z" fill="#d0d0d6"/><path d="M0 28L1.5 29.5H8.5L7.5 28Z" fill="#cacad0"/></g><g transform="translate(13.5,275)"><text x="0" y="14" transform="scale(1,1.35) skewX(-14)" font-family="Liberation Sans" font-size="15" fill="#a4a4a4" stroke="#9a9a9a" stroke-width="0.3" letter-spacing="-1.2">abc</text></g><g fill="#2f3f7f"><path d="M238 22L243 26.5L238 31Z"/><path d="M238 74L243 78.5L238 83Z"/><path d="M238 125.5L243 130L238 134.5Z"/></g><g fill="#7f7f7f"><path d="M238 177L243 181.5L238 186Z"/><path d="M238 228.5L243 233L238 237.5Z"/><path d="M238 280L243 284.5L238 289Z"/></g></svg>
<div class="a mi" style="left:380px;top:157px"><u>Т</u>ень</div>
<div class="a mi" style="left:380px;top:208px"><u>О</u>тражение</div>
<div class="a mi" style="left:380px;top:260px">Све<u>ц</u>ение</div>
<div class="a mi dis" style="left:380px;top:312px"><u>Р</u>ельеф</div>
<div class="a mi dis" style="left:380px;top:363px">Поворот об<u>ъ</u>емной фигуры</div>
<div class="a mi dis" style="left:380px;top:415px"><u>П</u>реобразовать</div>
<!-- gallery -->
<div class="a" style="left:585px;top:244px;width:398px;height:422px;background:rgba(0,0,0,0.12);filter:blur(2.5px)"></div>
<div class="a" style="left:582px;top:241px;width:397px;height:421px;background:#fff;border:1px solid #a7abb0"></div>
<div class="a" style="left:583px;top:242px;width:374px;height:21px;background:#eef0f4;border-bottom:1px solid #e2e5ea"></div>
<div class="a" style="left:583px;top:327px;width:374px;height:22px;background:#eef0f4;border-top:1px solid #e2e5ea;border-bottom:1px solid #e2e5ea"></div>
<div class="a gh" style="left:590px;top:247px">Нет свечения</div>
<div class="a gh" style="left:590px;top:331px">Варианты свечения</div>
<div class="a" style="left:957px;top:242px;width:21px;height:356px;background:#f6f7f9;border-left:1px solid #eceef2"></div>
<div class="a" style="left:958px;top:243px;width:19px;height:20px;border:1px solid #a9adb5;border-radius:2px;background:linear-gradient(#fafbfc,#e9ebef)"></div>
<div class="a" style="left:961px;top:249px;width:0;height:0;border-left:6.5px solid transparent;border-right:6.5px solid transparent;border-bottom:6px solid #7286b8"></div>
<div class="a" style="left:958px;top:577px;width:19px;height:21px;border:1px solid #a9adb5;border-radius:2px;background:linear-gradient(#fafbfc,#e9ebef)"></div>
<div class="a" style="left:961px;top:584px;width:0;height:0;border-left:6.5px solid transparent;border-right:6.5px solid transparent;border-top:6px solid #7286b8"></div>
<div class="a" style="left:583px;top:597px;width:395px;height:1px;background:#dfe3e8"></div>
<div class="a" style="left:611px;top:598px;width:1px;height:54px;background:#e2e4e8"></div>
<div class="a" style="left:583px;top:652px;width:395px;height:9px;background:linear-gradient(#f6f8fb,#e8ebf0);border-top:1px solid #dde3ea"></div>
<svg class="a" style="left:768px;top:655px" width="24" height="4"><rect x="1" y="1" width="2" height="2" fill="#9aa0aa"/><rect x="7" y="1" width="2" height="2" fill="#9aa0aa"/><rect x="13" y="1" width="2" height="2" fill="#9aa0aa"/><rect x="19" y="1" width="2" height="2" fill="#9aa0aa"/></svg>
<div class="a" style="left:583.5px;top:264px;width:62px;height:62px;border:2px solid #f1c24f;border-radius:2px;background:#fff;box-shadow:inset 0 0 0 1px #fff3cc"></div>
<div class="a" style="left:708px;top:474px;width:62px;height:61px;border:1px solid #f1c24f;border-radius:2px;background:#fff;box-shadow:inset 0 0 0 1px #fdf0c8"></div>
<svg class="a" style="left:582px;top:241px" width="397" height="421"><defs><linearGradient id="gaf" x1="0" y1="0" x2="0" y2="1"><stop offset="0" stop-color="#fbfcff"/><stop offset="0.42" stop-color="#eef2fc"/><stop offset="0.5" stop-color="#e2e8f8"/><stop offset="1" stop-color="#dfe6f7"/></linearGradient><filter id="gw0" x="-50%" y="-50%" width="200%" height="200%"><feMorphology operator="dilate" radius="2.0" in="SourceGraphic" result="d"/><feGaussianBlur in="d" stdDeviation="0.8"/></filter><filter id="gw1" x="-50%" y="-50%" width="200%" height="200%"><feMorphology operator="dilate" radius="3.0" in="SourceGraphic" result="d"/><feGaussianBlur in="d" stdDeviation="1.2"/></filter><filter id="gw2" x="-50%" y="-50%" width="200%" height="200%"><feMorphology operator="dilate" radius="3.8" in="SourceGraphic" result="d"/><feGaussianBlur in="d" stdDeviation="1.8"/></filter><filter id="gw3" x="-50%" y="-50%" width="200%" height="200%"><feMorphology operator="dilate" radius="4.8" in="SourceGraphic" result="d"/><feGaussianBlur in="d" stdDeviation="2.6"/></filter></defs>
<g transform="translate(14,40)"><path d="M12.41 0H21.59L34.00 34.00H24.14L22.77 26.01H11.23L9.86 34.00H0ZM17.00 8.50L12.07 21.08H21.93Z" fill="#e9effb" stroke="#b3c8ee" stroke-width="1.1" fill-rule="evenodd"/><path d="M17 8.5L12.07 21.08H21.93Z" fill="#fff"/></g>
<g transform="translate(16.0,123.0)"><path d="M12.41 0H21.59L34.00 34.00H24.14L22.77 26.01H11.23L9.86 34.00H0ZM17.00 8.50L12.07 21.08H21.93Z" fill="#a6c6f3" filter="url(#gw0)"/><path d="M12.41 0H21.59L34.00 34.00H24.14L22.77 26.01H11.23L9.86 34.00H0ZM17.00 8.50L12.07 21.08H21.93Z" fill="url(#gaf)" stroke="#a4bdea" stroke-width="0.9" fill-rule="evenodd"/><path d="M17 8.5L12.07 21.08H21.93Z" fill="#a6c6f3"/></g><g transform="translate(78.2,123.0)"><path d="M12.41 0H21.59L34.00 34.00H24.14L22.77 26.01H11.23L9.86 34.00H0ZM17.00 8.50L12.07 21.08H21.93Z" fill="#f5a8a0" filter="url(#gw0)"/><path d="M12.41 0H21.59L34.00 34.00H24.14L22.77 26.01H11.23L9.86 34.00H0ZM17.00 8.50L12.07 21.08H21.93Z" fill="url(#gaf)" stroke="#a4bdea" stroke-width="0.9" fill-rule="evenodd"/><path d="M17 8.5L12.07 21.08H21.93Z" fill="#f5a8a0"/></g><g transform="translate(140.4,123.0)"><path d="M12.41 0H21.59L34.00 34.00H24.14L22.77 26.01H11.23L9.86 34.00H0ZM17.00 8.50L12.07 21.08H21.93Z" fill="#d0e8a0" filter="url(#gw0)"/><path d="M12.41 0H21.59L34.00 34.00H24.14L22.77 26.01H11.23L9.86 34.00H0ZM17.00 8.50L12.07 21.08H21.93Z" fill="url(#gaf)" stroke="#a4bdea" stroke-width="0.9" fill-rule="evenodd"/><path d="M17 8.5L12.07 21.08H21.93Z" fill="#d0e8a0"/></g><g transform="translate(202.6,123.0)"><path d="M12.41 0H21.59L34.00 34.00H24.14L22.77 26.01H11.23L9.86 34.00H0ZM17.00 8.50L12.07 21.08H21.93Z" fill="#c2aae2" filter="url(#gw0)"/><path d="M12.41 0H21.59L34.00 34.00H24.14L22.77 26.01H11.23L9.86 34.00H0ZM17.00 8.50L12.07 21.08H21.93Z" fill="url(#gaf)" stroke="#a4bdea" stroke-width="0.9" fill-rule="evenodd"/><path d="M17 8.5L12.07 21.08H21.93Z" fill="#c2aae2"/></g><g transform="translate(264.8,123.0)"><path d="M12.41 0H21.59L34.00 34.00H24.14L22.77 26.01H11.23L9.86 34.00H0ZM17.00 8.50L12.07 21.08H21.93Z" fill="#a0def6" filter="url(#gw0)"/><path d="M12.41 0H21.59L34.00 34.00H24.14L22.77 26.01H11.23L9.86 34.00H0ZM17.00 8.50L12.07 21.08H21.93Z" fill="url(#gaf)" stroke="#a4bdea" stroke-width="0.9" fill-rule="evenodd"/><path d="M17 8.5L12.07 21.08H21.93Z" fill="#a0def6"/></g><g transform="translate(327.0,123.0)"><path d="M12.41 0H21.59L34.00 34.00H24.14L22.77 26.01H11.23L9.86 34.00H0ZM17.00 8.50L12.07 21.08H21.93Z" fill="#f8d09c" filter="url(#gw0)"/><path d="M12.41 0H21.59L34.00 34.00H24.14L22.77 26.01H11.23L9.86 34.00H0ZM17.00 8.50L12.07 21.08H21.93Z" fill="url(#gaf)" stroke="#a4bdea" stroke-width="0.9" fill-rule="evenodd"/><path d="M17 8.5L12.07 21.08H21.93Z" fill="#f8d09c"/></g><g transform="translate(16.0,185.2)"><path d="M12.41 0H21.59L34.00 34.00H24.14L22.77 26.01H11.23L9.86 34.00H0ZM17.00 8.50L12.07 21.08H21.93Z" fill="#a6c6f3" filter="url(#gw1)"/><path d="M12.41 0H21.59L34.00 34.00H24.14L22.77 26.01H11.23L9.86 34.00H0ZM17.00 8.50L12.07 21.08H21.93Z" fill="url(#gaf)" stroke="#a4bdea" stroke-width="0.9" fill-rule="evenodd"/><path d="M17 8.5L12.07 21.08H21.93Z" fill="#a6c6f3"/></g><g transform="translate(78.2,185.2)"><path d="M12.41 0H21.59L34.00 34.00H24.14L22.77 26.01H11.23L9.86 34.00H0ZM17.00 8.50L12.07 21.08H21.93Z" fill="#f5a8a0" filter="url(#gw1)"/><path d="M12.41 0H21.59L34.00 34.00H24.14L22.77 26.01H11.23L9.86 34.00H0ZM17.00 8.50L12.07 21.08H21.93Z" fill="url(#gaf)" stroke="#a4bdea" stroke-width="0.9" fill-rule="evenodd"/><path d="M17 8.5L12.07 21.08H21.93Z" fill="#f5a8a0"/></g><g transform="translate(140.4,185.2)"><path d="M12.41 0H21.59L34.00 34.00H24.14L22.77 26.01H11.23L9.86 34.00H0ZM17.00 8.50L12.07 21.08H21.93Z" fill="#d0e8a0" filter="url(#gw1)"/><path d="M12.41 0H21.59L34.00 34.00H24.14L22.77 26.01H11.23L9.86 34.00H0ZM17.00 8.50L12.07 21.08H21.93Z" fill="url(#gaf)" stroke="#a4bdea" stroke-width="0.9" fill-rule="evenodd"/><path d="M17 8.5L12.07 21.08H21.93Z" fill="#d0e8a0"/></g><g transform="translate(202.6,185.2)"><path d="M12.41 0H21.59L34.00 34.00H24.14L22.77 26.01H11.23L9.86 34.00H0ZM17.00 8.50L12.07 21.08H21.93Z" fill="#c2aae2" filter="url(#gw1)"/><path d="M12.41 0H21.59L34.00 34.00H24.14L22.77 26.01H11.23L9.86 34.00H0ZM17.00 8.50L12.07 21.08H21.93Z" fill="url(#gaf)" stroke="#a4bdea" stroke-width="0.9" fill-rule="evenodd"/><path d="M17 8.5L12.07 21.08H21.93Z" fill="#c2aae2"/></g><g transform="translate(264.8,185.2)"><path d="M12.41 0H21.59L34.00 34.00H24.14L22.77 26.01H11.23L9.86 34.00H0ZM17.00 8.50L12.07 21.08H21.93Z" fill="#a0def6" filter="url(#gw1)"/><path d="M12.41 0H21.59L34.00 34.00H24.14L22.77 26.01H11.23L9.86 34.00H0ZM17.00 8.50L12.07 21.08H21.93Z" fill="url(#gaf)" stroke="#a4bdea" stroke-width="0.9" fill-rule="evenodd"/><path d="M17 8.5L12.07 21.08H21.93Z" fill="#a0def6"/></g><g transform="translate(327.0,185.2)"><path d="M12.41 0H21.59L34.00 34.00H24.14L22.77 26.01H11.23L9.86 34.00H0ZM17.00 8.50L12.07 21.08H21.93Z" fill="#f8d09c" filter="url(#gw1)"/><path d="M12.41 0H21.59L34.00 34.00H24.14L22.77 26.01H11.23L9.86 34.00H0ZM17.00 8.50L12.07 21.08H21.93Z" fill="url(#gaf)" stroke="#a4bdea" stroke-width="0.9" fill-rule="evenodd"/><path d="M17 8.5L12.07 21.08H21.93Z" fill="#f8d09c"/></g><g transform="translate(16.0,247.4)"><path d="M12.41 0H21.59L34.00 34.00H24.14L22.77 26.01H11.23L9.86 34.00H0ZM17.00 8.50L12.07 21.08H21.93Z" fill="#a6c6f3" filter="url(#gw2)"/><path d="M12.41 0H21.59L34.00 34.00H24.14L22.77 26.01H11.23L9.86 34.00H0ZM17.00 8.50L12.07 21.08H21.93Z" fill="url(#gaf)" stroke="#a4bdea" stroke-width="0.9" fill-rule="evenodd"/><path d="M17 8.5L12.07 21.08H21.93Z" fill="#a6c6f3"/></g><g transform="translate(78.2,247.4)"><path d="M12.41 0H21.59L34.00 34.00H24.14L22.77 26.01H11.23L9.86 34.00H0ZM17.00 8.50L12.07 21.08H21.93Z" fill="#f5a8a0" filter="url(#gw2)"/><path d="M12.41 0H21.59L34.00 34.00H24.14L22.77 26.01H11.23L9.86 34.00H0ZM17.00 8.50L12.07 21.08H21.93Z" fill="url(#gaf)" stroke="#a4bdea" stroke-width="0.9" fill-rule="evenodd"/><path d="M17 8.5L12.07 21.08H21.93Z" fill="#f5a8a0"/></g><g transform="translate(140.4,247.4)"><path d="M12.41 0H21.59L34.00 34.00H24.14L22.77 26.01H11.23L9.86 34.00H0ZM17.00 8.50L12.07 21.08H21.93Z" fill="#d0e8a0" filter="url(#gw2)"/><path d="M12.41 0H21.59L34.00 34.00H24.14L22.77 26.01H11.23L9.86 34.00H0ZM17.00 8.50L12.07 21.08H21.93Z" fill="url(#gaf)" stroke="#a4bdea" stroke-width="0.9" fill-rule="evenodd"/><path d="M17 8.5L12.07 21.08H21.93Z" fill="#d0e8a0"/></g><g transform="translate(202.6,247.4)"><path d="M12.41 0H21.59L34.00 34.00H24.14L22.77 26.01H11.23L9.86 34.00H0ZM17.00 8.50L12.07 21.08H21.93Z" fill="#c2aae2" filter="url(#gw2)"/><path d="M12.41 0H21.59L34.00 34.00H24.14L22.77 26.01H11.23L9.86 34.00H0ZM17.00 8.50L12.07 21.08H21.93Z" fill="url(#gaf)" stroke="#a4bdea" stroke-width="0.9" fill-rule="evenodd"/><path d="M17 8.5L12.07 21.08H21.93Z" fill="#c2aae2"/></g><g transform="translate(264.8,247.4)"><path d="M12.41 0H21.59L34.00 34.00H24.14L22.77 26.01H11.23L9.86 34.00H0ZM17.00 8.50L12.07 21.08H21.93Z" fill="#a0def6" filter="url(#gw2)"/><path d="M12.41 0H21.59L34.00 34.00H24.14L22.77 26.01H11.23L9.86 34.00H0ZM17.00 8.50L12.07 21.08H21.93Z" fill="url(#gaf)" stroke="#a4bdea" stroke-width="0.9" fill-rule="evenodd"/><path d="M17 8.5L12.07 21.08H21.93Z" fill="#a0def6"/></g><g transform="translate(327.0,247.4)"><path d="M12.41 0H21.59L34.00 34.00H24.14L22.77 26.01H11.23L9.86 34.00H0ZM17.00 8.50L12.07 21.08H21.93Z" fill="#f8d09c" filter="url(#gw2)"/><path d="M12.41 0H21.59L34.00 34.00H24.14L22.77 26.01H11.23L9.86 34.00H0ZM17.00 8.50L12.07 21.08H21.93Z" fill="url(#gaf)" stroke="#a4bdea" stroke-width="0.9" fill-rule="evenodd"/><path d="M17 8.5L12.07 21.08H21.93Z" fill="#f8d09c"/></g><g transform="translate(16.0,309.6)"><path d="M12.41 0H21.59L34.00 34.00H24.14L22.77 26.01H11.23L9.86 34.00H0ZM17.00 8.50L12.07 21.08H21.93Z" fill="#a6c6f3" filter="url(#gw3)"/><path d="M12.41 0H21.59L34.00 34.00H24.14L22.77 26.01H11.23L9.86 34.00H0ZM17.00 8.50L12.07 21.08H21.93Z" fill="url(#gaf)" stroke="#a4bdea" stroke-width="0.9" fill-rule="evenodd"/><path d="M17 8.5L12.07 21.08H21.93Z" fill="#a6c6f3"/></g><g transform="translate(78.2,309.6)"><path d="M12.41 0H21.59L34.00 34.00H24.14L22.77 26.01H11.23L9.86 34.00H0ZM17.00 8.50L12.07 21.08H21.93Z" fill="#f5a8a0" filter="url(#gw3)"/><path d="M12.41 0H21.59L34.00 34.00H24.14L22.77 26.01H11.23L9.86 34.00H0ZM17.00 8.50L12.07 21.08H21.93Z" fill="url(#gaf)" stroke="#a4bdea" stroke-width="0.9" fill-rule="evenodd"/><path d="M17 8.5L12.07 21.08H21.93Z" fill="#f5a8a0"/></g><g transform="translate(140.4,309.6)"><path d="M12.41 0H21.59L34.00 34.00H24.14L22.77 26.01H11.23L9.86 34.00H0ZM17.00 8.50L12.07 21.08H21.93Z" fill="#d0e8a0" filter="url(#gw3)"/><path d="M12.41 0H21.59L34.00 34.00H24.14L22.77 26.01H11.23L9.86 34.00H0ZM17.00 8.50L12.07 21.08H21.93Z" fill="url(#gaf)" stroke="#a4bdea" stroke-width="0.9" fill-rule="evenodd"/><path d="M17 8.5L12.07 21.08H21.93Z" fill="#d0e8a0"/></g><g transform="translate(202.6,309.6)"><path d="M12.41 0H21.59L34.00 34.00H24.14L22.77 26.01H11.23L9.86 34.00H0ZM17.00 8.50L12.07 21.08H21.93Z" fill="#c2aae2" filter="url(#gw3)"/><path d="M12.41 0H21.59L34.00 34.00H24.14L22.77 26.01H11.23L9.86 34.00H0ZM17.00 8.50L12.07 21.08H21.93Z" fill="url(#gaf)" stroke="#a4bdea" stroke-width="0.9" fill-rule="evenodd"/><path d="M17 8.5L12.07 21.08H21.93Z" fill="#c2aae2"/></g><g transform="translate(264.8,309.6)"><path d="M12.41 0H21.59L34.00 34.00H24.14L22.77 26.01H11.23L9.86 34.00H0ZM17.00 8.50L12.07 21.08H21.93Z" fill="#a0def6" filter="url(#gw3)"/><path d="M12.41 0H21.59L34.00 34.00H24.14L22.77 26.01H11.23L9.86 34.00H0ZM17.00 8.50L12.07 21.08H21.93Z" fill="url(#gaf)" stroke="#a4bdea" stroke-width="0.9" fill-rule="evenodd"/><path d="M17 8.5L12.07 21.08H21.93Z" fill="#a0def6"/></g><g transform="translate(327.0,309.6)"><path d="M12.41 0H21.59L34.00 34.00H24.14L22.77 26.01H11.23L9.86 34.00H0ZM17.00 8.50L12.07 21.08H21.93Z" fill="#f8d09c" filter="url(#gw3)"/><path d="M12.41 0H21.59L34.00 34.00H24.14L22.77 26.01H11.23L9.86 34.00H0ZM17.00 8.50L12.07 21.08H21.93Z" fill="url(#gaf)" stroke="#a4bdea" stroke-width="0.9" fill-rule="evenodd"/><path d="M17 8.5L12.07 21.08H21.93Z" fill="#f8d09c"/></g>
<path d="M381.5 367L386.5 371L381.5 375Z" fill="#2f3f7f"/>
<g transform="translate(8,366)"><path d="M6.5 1C10 1 13 3 13 6C13 8 11 8.5 10 9C9 9.5 10 11.5 8 12C4 12.5 1 10 1 6.5C1 3 3.5 1 6.5 1Z" fill="#f7cf58" stroke="#b88a20" stroke-width="0.8"/><circle cx="5" cy="4" r="1.3" fill="#e03030"/><circle cx="8.3" cy="4" r="1.3" fill="#3050d0"/><circle cx="4" cy="7" r="1.3" fill="#30a030"/><circle cx="7" cy="7.5" r="1.1" fill="#fff"/></g>
<rect x="8" y="391" width="13" height="13" rx="2" fill="#e6e8ee" stroke="#34b5ec" stroke-width="2"/>
</svg>
<div class="a gi" style="left:620px;top:607px">Дру<u>г</u>ие цвета свечения</div>
<div class="a gi" style="left:620px;top:633px"><u>П</u>араметры свечения...</div>
</body></html>
